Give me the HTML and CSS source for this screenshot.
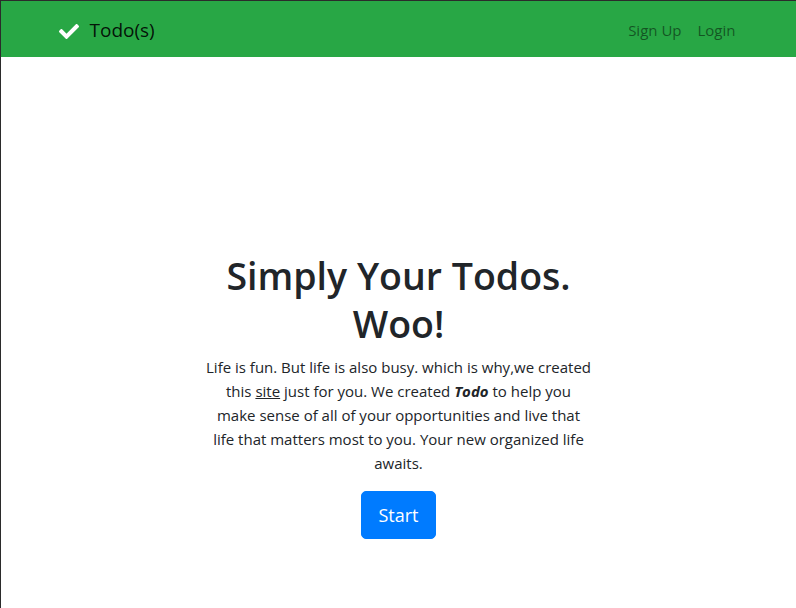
FILE: index.html
```html
<!DOCTYPE html>
<html lang="en">
<head>
<meta charset="utf-8">
<title>Todo(s)</title>
<link rel="stylesheet" href="styles.css">
</head>
<body>
<div class="frame">
  <nav class="navbar">
    <div class="container nav-inner">
      <a class="brand" href="#">
        <svg class="check" viewBox="0 64 512 384" width="20" height="15" aria-hidden="true"><path fill="#fff" d="M173.9 439.4l-166.4-166.4c-10-10-10-26.2 0-36.2l36.2-36.2c10-10 26.2-10 36.2 0L192 312.7 432.1 72.6c10-10 26.2-10 36.2 0l36.2 36.2c10 10 10 26.2 0 36.2L210.1 439.4c-10 10-26.2 10-36.2 0z"/></svg>
        <span>Todo(s)</span>
      </a>
      <ul class="nav-links">
        <li><a href="#">Sign Up</a></li>
        <li><a href="#">Login</a></li>
      </ul>
    </div>
  </nav>
  <main class="hero">
    <h1 class="title">Simply Your Todos.<br>Woo!</h1>
    <p class="lead">Life is fun. But life is also busy. which is why,we created<br>this <u>site</u> just for you. We created <b><i>Todo</i></b> to help you<br>make sense of all of your opportunities and live that<br>life that matters most to you. Your new organized life<br>awaits.</p>
    <a class="btn" href="#">Start</a>
  </main>
</div>
</body>
</html>
```
FILE: styles.css
```css
* { box-sizing: border-box; }
html, body { margin: 0; padding: 0; height: 100%; }
body {
  font-family: "Open Sans", "Noto Sans", sans-serif;
  color: #212529;
  background: #2b2b2b;
}
.frame {
  margin-left: 1px;
  margin-top: 1px;
  min-height: 607px;
  background: #fff;
}
.navbar {
  background: #28a745;
  height: 56px;
  padding-top: 2px;
  display: flex;
  align-items: center;
}
.container {
  width: 720px;
  margin: 0 auto;
  padding: 0 15px;
}
.nav-inner {
  display: flex;
  align-items: center;
  justify-content: space-between;
}
.brand {
  display: flex;
  align-items: center;
  gap: 11px;
  color: rgba(0,0,0,.9);
  text-decoration: none;
  font-size: 19px;
  padding-left: 5px;
}
.check { display: block; margin-top: 2px; }
.nav-links {
  list-style: none;
  margin: 0;
  padding: 0;
  display: flex;
}
.nav-links a {
  display: block;
  padding: 8px 8px;
  color: rgba(0,0,0,.5);
  text-decoration: none;
  font-size: 15px;
}
.hero {
  display: flex;
  flex-direction: column;
  align-items: center;
  padding-top: 195px;
  text-align: center;
}
.title {
  margin: 0 0 7px;
  font-size: 37.5px;
  font-weight: 600;
  line-height: 48px;
}
.lead {
  width: 420px;
  margin: 0 0 16px;
  font-size: 15px;
  line-height: 24px;
}
.btn {
  display: inline-block;
  background: #007bff;
  border: 1px solid #007bff;
  color: #fff;
  text-decoration: none;
  font-size: 18px;
  line-height: 30px;
  padding: 8px 16px;
  border-radius: 5px;
}
```
